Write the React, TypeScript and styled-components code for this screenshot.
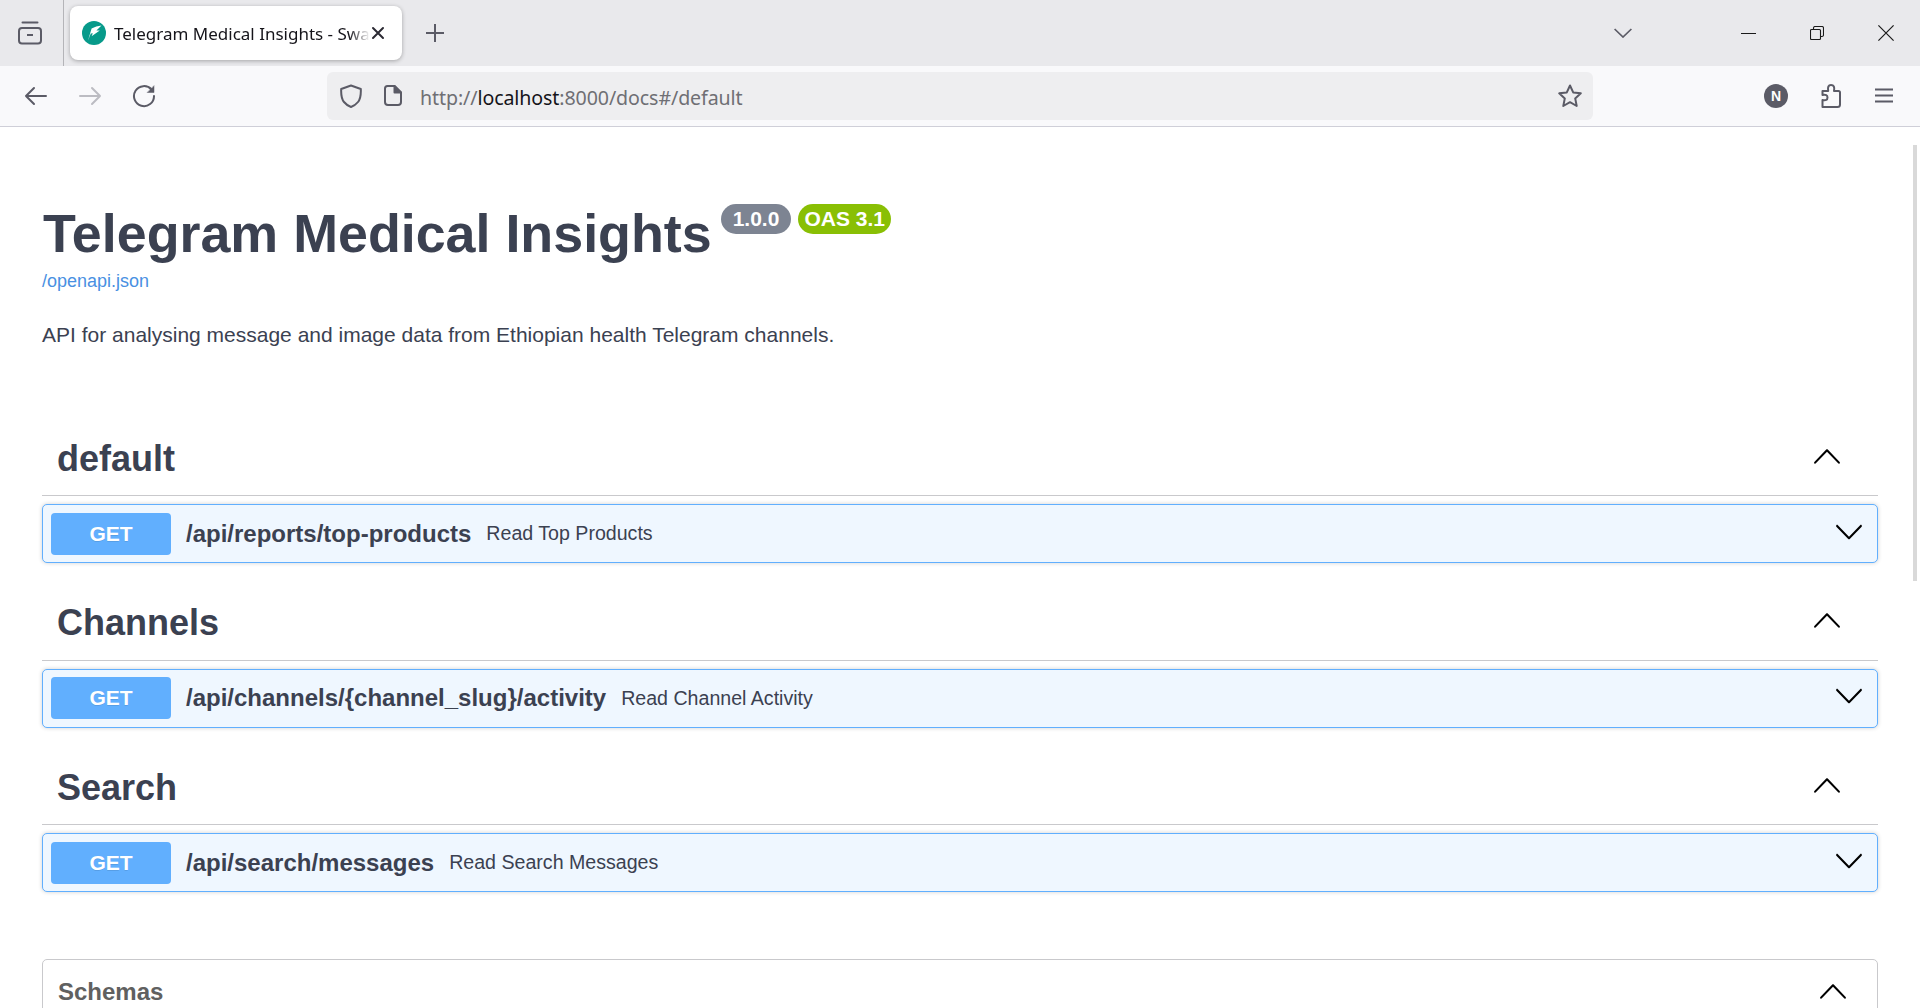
import * as React from 'react';
import styled, { createGlobalStyle } from 'styled-components';

const GlobalStyle = createGlobalStyle`
  html, body {
    margin: 0;
    padding: 0;
    height: 100%;
    overflow: hidden;
    background: #fff;
  }
`;

const uiFont = `'Noto Sans', 'Open Sans', sans-serif`;
const docFont = `'Liberation Sans', Arial, sans-serif`;

const Screen = styled.div`
  display: flex;
  flex-direction: column;
  width: 1920px;
  height: 1008px;
  overflow: hidden;
`;

const TabBar = styled.div`
  display: flex;
  align-items: center;
  flex: none;
  height: 66px;
  background: #e9e9ec;
`;

const SidebarSlot = styled.div`
  display: flex;
  align-items: center;
  flex: none;
  width: 64px;
  height: 66px;
  padding-left: 18px;
  border-right: 1px solid #b4b4b8;
  box-sizing: border-box;
`;

const Tab = styled.div`
  display: flex;
  align-items: center;
  flex: none;
  width: 332px;
  height: 54px;
  margin-left: 6px;
  padding: 0 12px;
  box-sizing: border-box;
  background: #fff;
  border-radius: 8px;
  box-shadow: 0 1px 4px rgba(0, 0, 0, 0.3);
`;

const TabLabel = styled.span`
  flex: none;
  width: 257px;
  margin-left: 8px;
  overflow: hidden;
  white-space: nowrap;
  font: 400 17px ${uiFont};
  color: #15141a;
  -webkit-mask-image: linear-gradient(to right, #000 235px, transparent 256px);
  mask-image: linear-gradient(to right, #000 235px, transparent 256px);
`;

const TabStrip = styled.div`
  display: flex;
  align-items: center;
  flex: 1;
  padding-left: 24px;
`;

const WindowControls = styled.div`
  display: flex;
  align-items: center;
  margin-right: 26px;
  gap: 54px;
`;

const ListTabs = styled.div`
  display: flex;
  margin-right: 109px;
`;

const ToolBar = styled.div`
  display: flex;
  align-items: center;
  flex: none;
  height: 61px;
  box-sizing: border-box;
  padding-bottom: 1px;
  background: #f9f9fb;
  border-bottom: 1px solid #cfcfd8;
`;

const NavGroup = styled.div`
  display: flex;
  align-items: center;
  gap: 30px;
  flex: none;
  width: 327px;
  padding-left: 24px;
  box-sizing: border-box;
`;

const UrlBar = styled.div`
  display: flex;
  align-items: center;
  flex: none;
  width: 1266px;
  height: 48px;
  padding: 0 11px 0 13px;
  box-sizing: border-box;
  background: #eeeef0;
  border-radius: 6px;
`;

const UrlText = styled.span`
  flex: 1;
  margin-left: 18px;
  padding-top: 3px;
  font: 400 19.6px ${uiFont};
  letter-spacing: -0.1px;
  color: #6f6f74;
`;

const UrlHost = styled.span`
  color: #15141a;
`;

const UrlIcons = styled.div`
  display: flex;
  align-items: center;
  gap: 22px;
`;

const ToolActions = styled.div`
  display: flex;
  align-items: center;
  justify-content: flex-end;
  flex: 1;
  gap: 33px;
  padding-right: 27px;
`;

const PuzzleSlot = styled.span`
  display: block;
  margin-right: 1px;
`;

const ProfileBadge = styled.span`
  display: flex;
  align-items: center;
  justify-content: center;
  width: 24px;
  height: 24px;
  border-radius: 50%;
  background: #5b5b66;
  color: #fff;
  font: 700 14px ${docFont};
`;

const Page = styled.main`
  position: relative;
  flex: 1;
  overflow: hidden;
  padding: 0 42px;
  font-family: ${docFont};
  color: #3b4151;
`;

const Scroll = styled.div`
  position: absolute;
  top: 18px;
  right: 3px;
  width: 4px;
  height: 436px;
  background: #d9d9d9;
`;

const Info = styled.header`
  padding-top: 74px;
  margin-bottom: 74px;
`;

const TitleRow = styled.div`
  display: flex;
  align-items: flex-start;
`;

const Title = styled.h1`
  margin: 0;
  padding-left: 1px;
  font-size: 53.8px;
  line-height: 64px;
  font-weight: 700;
  color: #3b4151;
`;

const Badge = styled.span<{ $color: string; $pad: number; $gap: number }>`
  display: inline-block;
  margin-left: ${(p) => p.$gap}px;
  margin-top: 3px;
  padding: 0 ${(p) => p.$pad}px;
  height: 30px;
  line-height: 30px;
  border-radius: 15px;
  background: ${(p) => p.$color};
  color: #fff;
  font-size: 21px;
  font-weight: 700;
`;

const SpecLink = styled.a`
  display: block;
  margin-top: 4px;
  font-size: 18px;
  line-height: 24px;
  color: #4990e2;
`;

const Description = styled.p`
  margin: 27px 0 0;
  font-size: 21px;
  line-height: 30px;
  color: #3b4151;
`;

const TagSection = styled.section`
  margin-bottom: 25.6px;
`;

const TagHeader = styled.div`
  display: flex;
  align-items: center;
  justify-content: space-between;
  height: 71px;
  box-sizing: content-box;
  padding: 0 36px 0 15px;
  border-bottom: 1px solid #c9c9cc;
`;

const TagName = styled.h3`
  margin: 0 0 2px;
  font-size: 36px;
  line-height: 66px;
  font-weight: 700;
  color: #3b4151;
`;

const Operation = styled.div`
  display: flex;
  align-items: center;
  height: 59px;
  margin-top: 8px;
  padding: 0 13px 0 8px;
  box-sizing: border-box;
  background: #eff7ff;
  border: 1px solid #61affe;
  border-radius: 5px;
  box-shadow: 0 0 4px rgba(0, 0, 0, 0.19);
`;

const Method = styled.span`
  flex: none;
  width: 120px;
  height: 42px;
  line-height: 42px;
  text-align: center;
  border-radius: 4px;
  background: #61affe;
  color: #fff;
  font-size: 21px;
  font-weight: 700;
  text-shadow: 0 1px 0 rgba(0, 0, 0, 0.1);
`;

const OpPath = styled.span`
  margin-left: 15px;
  font-size: 24px;
  font-weight: 700;
  color: #3b4151;
`;

const OpSummary = styled.span`
  flex: 1;
  margin-left: 15px;
  font-size: 19.6px;
  color: #3b4151;
`;

const SchemasBox = styled.section`
  display: flex;
  align-items: flex-start;
  justify-content: space-between;
  margin-top: 67px;
  height: 90px;
  padding: 16px 29px 0 15px;
  border: 1px solid #c9c9cc;
  border-radius: 5px;
`;

const SchemasTitle = styled.h4`
  margin: 1px 0 0;
  font-size: 24px;
  line-height: 30px;
  font-weight: 700;
  color: #606060;
`;

const Ico = styled.svg`
  display: block;
  flex: none;
`;

const ChevronBox = styled.span<{ $lift: number }>`
  display: block;
  flex: none;
  margin-top: -${(p) => p.$lift}px;
`;

const Favicon = () => (
  <Ico width="24" height="24" viewBox="0 0 24 24">
    <circle cx="12" cy="12" r="12" fill="#079a8a" />
    <path d="M6 19.5 L9.6 7.6 Q14 5 19.5 4.6 L14.4 9.4 L17.8 9.4 L9.6 15.2 L10.8 12.2 L8.8 12.4 Z" fill="#fff" />
  </Ico>
);

const SidebarIcon = () => (
  <Ico width="24" height="24" viewBox="0 0 24 24" fill="none" stroke="#5b5b66" strokeWidth="2">
    <rect x="1" y="7" width="22" height="15.5" rx="3" />
    <path d="M4.5 1.5 H19.5" strokeLinecap="round" />
    <path d="M9 14 H15" />
  </Ico>
);

const CloseTabIcon = () => (
  <Ico width="14" height="14" viewBox="0 0 14 14" stroke="#2b2a33" strokeWidth="2" strokeLinecap="round">
    <path d="M2 2 L12 12 M12 2 L2 12" />
  </Ico>
);

const PlusIcon = () => (
  <Ico width="18" height="18" viewBox="0 0 18 18" stroke="#5b5b66" strokeWidth="2">
    <path d="M9 0 V18 M0 9 H18" />
  </Ico>
);

const TabsChevron = () => (
  <Ico width="18" height="10" viewBox="0 0 18 10" fill="none" stroke="#5b5b66" strokeWidth="1.7">
    <path d="M0.6 1 L9 9 L17.4 1" />
  </Ico>
);

const MinIcon = () => (
  <Ico width="15" height="16" viewBox="0 0 15 16" stroke="#1a1a1a" strokeWidth="1">
    <path d="M0 8.5 H15" />
  </Ico>
);

const RestoreIcon = () => (
  <Ico width="14" height="14" viewBox="0 0 14 14" fill="none" stroke="#1a1a1a" strokeWidth="1.1">
    <rect x="0.5" y="3.5" width="10" height="10" rx="1" />
    <path d="M3.5 3.5 V2 Q3.5 0.5 5 0.5 H12 Q13.5 0.5 13.5 2 V9 Q13.5 10.5 12 10.5 H10.5" />
  </Ico>
);

const CloseWinIcon = () => (
  <Ico width="16" height="16" viewBox="0 0 16 16" stroke="#1a1a1a" strokeWidth="1.2">
    <path d="M0.4 0.4 L15.6 15.6 M15.6 0.4 L0.4 15.6" />
  </Ico>
);

const ArrowIcon = ({ color, flip }: { color: string; flip?: boolean }) => (
  <Ico width="24" height="24" viewBox="0 0 24 24" fill="none" stroke={color} strokeWidth="2" strokeLinecap="round" strokeLinejoin="round">
    <path d={flip ? 'M2 12 H22 M14 4 L22 12 L14 20' : 'M22 12 H2 M10 4 L2 12 L10 20'} />
  </Ico>
);

const ReloadIcon = () => (
  <Ico width="24" height="24" viewBox="0 0 24 24" fill="none" stroke="#5b5b66" strokeWidth="2" strokeLinecap="round">
    <path d="M19.5 5.5 A10 10 0 1 0 22 12" />
    <path d="M22 2 V8.5 H15.5 Z" fill="#5b5b66" strokeWidth="0.5" />
  </Ico>
);

const ShieldIcon = () => (
  <Ico width="22" height="24" viewBox="0 0 22 24" fill="none" stroke="#5b5b66" strokeWidth="2" strokeLinejoin="round">
    <path d="M11 1.5 L20.8 5 Q21.2 14 18 18 Q15 21.6 11 23 Q7 21.6 4 18 Q0.8 14 1.2 5 Z" />
  </Ico>
);

const PageIcon = () => (
  <Ico width="18" height="21" viewBox="0 0 18 21" fill="none" stroke="#5b5b66" strokeWidth="2" strokeLinejoin="round">
    <path d="M3.5 1 H10.5 L17 7.5 V17 Q17 20 14 20 H4 Q1 20 1 17 V3.5 Q1 1 3.5 1 Z" />
    <path d="M10.5 1 L17 7.5 H10.5 Z" fill="#5b5b66" />
  </Ico>
);

const StarIcon = () => (
  <Ico width="24" height="24" viewBox="0 0 24 24" fill="none" stroke="#5b5b66" strokeWidth="2" strokeLinejoin="round">
    <path d="M12 1.5 L15.2 8.4 L22.8 9.3 L17.2 14.4 L18.7 22 L12 18.2 L5.3 22 L6.8 14.4 L1.2 9.3 L8.8 8.4 Z" />
  </Ico>
);

const PuzzleIcon = () => (
  <Ico width="20" height="24" viewBox="0 0 20 24" fill="none" stroke="#5b5b66" strokeWidth="2" strokeLinejoin="round">
    <path d="M1.5 23 H16.5 Q19 23 19 20.5 V8.5 Q19 7 17.5 7 H13 Q14.2 1 10 1 Q6.2 1 7.2 7 H1.5 V11 Q6.5 10 6.5 13.5 Q6.5 17 1.5 16 V23 Z" />
  </Ico>
);

const MenuIcon = () => (
  <Ico width="18" height="15" viewBox="0 0 18 15" stroke="#5b5b66" strokeWidth="2">
    <path d="M0 1.5 H18 M0 7.5 H18 M0 13.5 H18" />
  </Ico>
);

const Chevron = ({ up, size }: { up?: boolean; size: number }) => (
  <Ico width={size} height={size} viewBox="0 0 20 20" fill="#000">
    <path
      d={
        up
          ? 'M 17.418 14.908 C 17.69 15.192 18.143 15.2 18.426 14.928 C 18.709 14.655 18.717 14.203 18.445 13.92 L 10.514 5.685 C 10.233 5.393 9.767 5.393 9.486 5.685 L 1.555 13.92 C 1.283 14.203 1.291 14.655 1.574 14.928 C 1.857 15.2 2.31 15.192 2.582 14.908 L 10 7.206 Z'
          : 'M 17.418 6.109 C 17.69 5.826 18.143 5.817 18.426 6.089 C 18.709 6.362 18.717 6.814 18.445 7.097 L 10.514 15.332 C 10.233 15.624 9.767 15.624 9.486 15.332 L 1.555 7.097 C 1.283 6.814 1.291 6.362 1.574 6.089 C 1.857 5.817 2.31 5.826 2.582 6.109 L 10 13.811 Z'
      }
    />
  </Ico>
);

const groups = [
  { tag: 'default', path: '/api/reports/top-products', summary: 'Read Top Products' },
  { tag: 'Channels', path: '/api/channels/{channel_slug}/activity', summary: 'Read Channel Activity' },
  { tag: 'Search', path: '/api/search/messages', summary: 'Read Search Messages' }
];

export default function App(): JSX.Element {
  return (
    <Screen>
      <GlobalStyle />
      <TabBar>
        <SidebarSlot>
          <SidebarIcon />
        </SidebarSlot>
        <Tab>
          <Favicon />
          <TabLabel>Telegram Medical Insights - Swagger UI</TabLabel>
          <CloseTabIcon />
        </Tab>
        <TabStrip>
          <PlusIcon />
        </TabStrip>
        <ListTabs>
          <TabsChevron />
        </ListTabs>
        <WindowControls>
          <MinIcon />
          <RestoreIcon />
          <CloseWinIcon />
        </WindowControls>
      </TabBar>
      <ToolBar>
        <NavGroup>
          <ArrowIcon color="#5b5b66" />
          <ArrowIcon color="#bcbcc2" flip />
          <ReloadIcon />
        </NavGroup>
        <UrlBar>
          <UrlIcons>
            <ShieldIcon />
            <PageIcon />
          </UrlIcons>
          <UrlText>
            http://<UrlHost>localhost</UrlHost>:8000/docs#/default
          </UrlText>
          <StarIcon />
        </UrlBar>
        <ToolActions>
          <ProfileBadge>N</ProfileBadge>
          <PuzzleSlot>
            <PuzzleIcon />
          </PuzzleSlot>
          <MenuIcon />
        </ToolActions>
      </ToolBar>
      <Page>
        <Scroll />
        <Info>
          <TitleRow>
            <Title>Telegram Medical Insights</Title>
            <Badge $color="#7d8492" $pad={12} $gap={9}>1.0.0</Badge>
            <Badge $color="#89bf04" $pad={6} $gap={7}>OAS 3.1</Badge>
          </TitleRow>
          <SpecLink>/openapi.json</SpecLink>
          <Description>API for analysing message and image data from Ethiopian health Telegram channels.</Description>
        </Info>
        {groups.map((g) => (
          <TagSection key={g.tag}>
            <TagHeader>
              <TagName>{g.tag}</TagName>
              <ChevronBox $lift={8}>
                <Chevron up size={30} />
              </ChevronBox>
            </TagHeader>
            <Operation>
              <Method>GET</Method>
              <OpPath>{g.path}</OpPath>
              <OpSummary>{g.summary}</OpSummary>
              <ChevronBox $lift={6}>
                <Chevron size={30} />
              </ChevronBox>
            </Operation>
          </TagSection>
        ))}
        <SchemasBox>
          <SchemasTitle>Schemas</SchemasTitle>
          <Chevron up size={30} />
        </SchemasBox>
      </Page>
    </Screen>
  );
}
